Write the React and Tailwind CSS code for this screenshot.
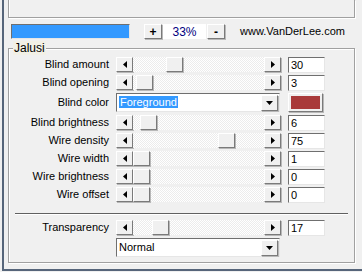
import React from "react";

// raised / sunken win-classic bevels
const raised = "border border-t-white border-l-white border-r-[#7a7a7a] border-b-[#7a7a7a] shadow-[1px_1px_0_#b8b8b8]";
const sunken = "border border-t-[#6f6f6f] border-l-[#6f6f6f] border-r-[#e6e6e6] border-b-[#e6e6e6]";

const ArrowLeft = () => (
  <svg width="4" height="7" viewBox="0 0 4 7"><polygon points="4,0 4,7 0,3.5" fill="#000" /></svg>
);
const ArrowRight = () => (
  <svg width="4" height="7" viewBox="0 0 4 7"><polygon points="0,0 0,7 4,3.5" fill="#000" /></svg>
);
const ArrowDown = () => (
  <svg width="7" height="4" viewBox="0 0 7 4"><polygon points="0,0 7,0 3.5,4" fill="#000" /></svg>
);

const Slider = ({ label, pos, value }) => (
  <div className="flex items-center h-[15px]">
    <div className="w-[100px] text-right">{label}</div>
    <div className="ml-[7px] flex h-[15px]">
      <div className={`w-[17px] h-[15px] bg-[#f0f0f0] flex items-center justify-center ${raised}`}>
        <ArrowLeft />
      </div>
      <div className="w-[131px] h-[15px] bg-[conic-gradient(#ffffff_25%,#ececec_0_50%,#ffffff_0_75%,#ececec_0)] bg-[length:2px_2px]">
        <div
          className={`w-[17px] h-[15px] bg-[#f0f0f0] ${raised}`}
          style={{ marginLeft: pos }}
        />
      </div>
      <div className={`w-[17px] h-[15px] bg-[#f0f0f0] flex items-center justify-center ${raised}`}>
        <ArrowRight />
      </div>
    </div>
    <div className={`ml-[7px] w-[37px] h-[16px] bg-white pl-[2px] leading-[14px] ${sunken}`}>{value}</div>
  </div>
);

const Combo = ({ children }) => (
  <div className={`w-[164px] h-[19px] bg-white flex items-center ${sunken}`}>
    <div className="flex-1 pl-[2px]">{children}</div>
    <div className={`w-[17px] h-[16px] bg-[#f0f0f0] flex items-center justify-center mr-[1px] ${raised}`}>
      <ArrowDown />
    </div>
  </div>
);

export default function App() {
  const rows = [
    { label: "Blind brightness", pos: 7, value: "6" },
    { label: "Wire density", pos: 85, value: "75" },
    { label: "Wire width", pos: 0, value: "1" },
    { label: "Wire brightness", pos: 0, value: "0" },
    { label: "Wire offset", pos: 0, value: "0" },
  ];

  return (
    <div className="w-[362px] h-[272px] bg-[#f0f0f0] overflow-hidden font-['Liberation_Sans',Arial,sans-serif] text-[11px] text-black">
      <div className="ml-[2px] h-[271px] border-l-2 border-b-2 border-[#56657a]">
        {/* bottom of the upper panel */}
        <div className="ml-[4px] w-[347px] h-[18px] border-l border-r border-b border-[#a0a0a0] shadow-[inset_1px_0_0_#fff,1px_1px_0_#fff]" />

        {/* preview strip */}
        <div className="mt-[6px] ml-[7px] flex items-center h-[15px]">
          <div className={`w-[119px] h-[15px] bg-[#3399ff] ${sunken}`} />
          <div className={`ml-[14px] w-[18px] h-[15px] bg-[#f0f0f0] flex items-center justify-center font-bold text-[12px] ${raised}`}>+</div>
          <div className="ml-[1px] w-[43px] h-[15px] bg-white text-[#000080] flex items-center justify-center text-[12px]">33%</div>
          <div className={`ml-[1px] w-[18px] h-[15px] bg-[#f0f0f0] flex items-center justify-center font-bold text-[12px] ${raised}`}>-</div>
          <div className="ml-[15px] text-[11px]">www.VanDerLee.com</div>
        </div>

        {/* Jalusi group */}
        <div className="relative mt-[9px] ml-[4px] w-[347px] h-[215px] border border-[#a0a0a0] shadow-[inset_1px_1px_0_#fff,1px_1px_0_#fff] pt-[8px]">
          <div className="absolute -top-[8px] left-[4px] px-[1px] bg-[#f2f0e6] text-[12px] leading-[14px]">Jalusi</div>

          <div className="flex flex-col gap-[3px]">
            <Slider label="Blind amount" pos={33} value="30" />
            <Slider label="Blind opening" pos={3} value="3" />
          </div>

          <div className="mt-[3px] flex items-center h-[19px]">
            <div className="w-[100px] text-right">Blind color</div>
            <div className="ml-[7px]">
              <Combo>
                <span className="bg-[#3399ff] text-white px-[1px]">Foreground</span>
              </Combo>
            </div>
            <div className={`ml-[8px] w-[35px] h-[19px] bg-[#f0f0f0] p-[2px] ${raised}`}>
              <div className="w-full h-full bg-[#a93a3a]" />
            </div>
          </div>

          <div className="mt-[3px] flex flex-col gap-[3px]">
            {rows.map((r) => (
              <Slider key={r.label} {...r} />
            ))}
          </div>

          <div className="mt-[11px] ml-[6px] w-[333px] h-[2px] border-t border-[#606060] border-b border-b-white" />

          <div className="mt-[5px]">
            <Slider label="Transparency" pos={19} value="17" />
          </div>
          <div className="mt-[3px] ml-[107px]">
            <Combo>Normal</Combo>
          </div>
        </div>
      </div>
    </div>
  );
}
